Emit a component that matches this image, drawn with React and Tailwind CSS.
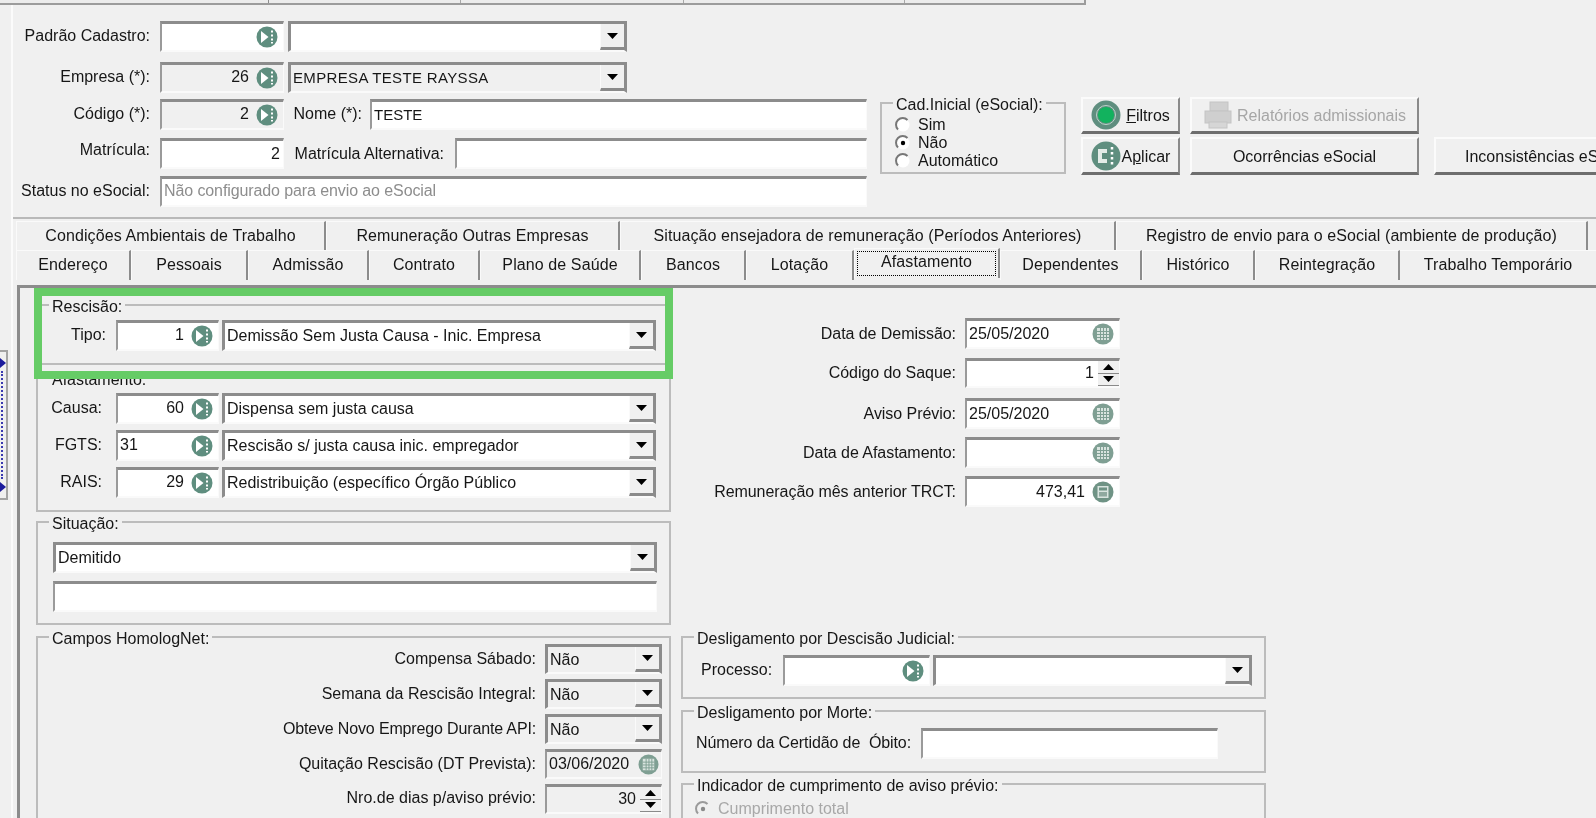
const sunken = "border-t-[3px] border-l-[2px] border-r border-b-2 border-t-[#8c8c8c] border-l-[#9a9a9a] border-r-[#fafafa] border-b-[#fafafa]";
const raised = "border-t-2 border-l-2 border-r-2 border-b-[3px] border-t-[#fbfbfb] border-l-[#fbfbfb] border-r-[#8a8a8a] border-b-[#6e6e6e]";

function Lookup() {
  return (
    <svg width="22" height="22" viewBox="0 0 22 22" className="shrink-0">
      <circle cx="11" cy="11" r="10.5" fill="#5f8e7f" />
      <path d="M5 5 L12.5 11 L5 17 Z" fill="#fff" />
      <path d="M16 4.5v2M16 8.5v2M16 12.5v2M16 16v1.5" stroke="#fff" strokeWidth="2" />
    </svg>
  );
}

function CalIcon({ size = 22 }) {
  return (
    <svg width={size} height={size} viewBox="0 0 22 22" className="shrink-0">
      <circle cx="11" cy="11" r="10.5" fill="#7f9f93" />
      <rect x="5" y="5" width="12" height="12" fill="#d9e4df" />
      <path d="M5 8.5h12M5 11.5h12M5 14.5h12M8.5 5v12M11.5 5v12M14.5 5v12" stroke="#7f9f93" strokeWidth="1" />
    </svg>
  );
}

function CalcIcon() {
  return (
    <svg width="22" height="22" viewBox="0 0 22 22" className="shrink-0">
      <circle cx="11" cy="11" r="10.5" fill="#6f9385" />
      <rect x="5.5" y="5" width="11" height="12" fill="#d9e4df" />
      <rect x="7" y="6.5" width="8" height="3" fill="#6f9385" />
      <rect x="7" y="11" width="8" height="4.5" fill="#8fa99f" />
    </svg>
  );
}

function Arrow({ up }) {
  return (
    <svg width="11" height="6" viewBox="0 0 11 6">
      <path d={up ? "M5.5 0 L11 6 L0 6 Z" : "M0 0 L11 0 L5.5 6 Z"} fill="#000" />
    </svg>
  );
}

function Field({ w, h = "h-[31px]", value, right, bg = "bg-white", muted, low, children }) {
  return (
    <div className={`${w} ${h} ${bg} ${sunken} shrink-0 flex items-center pl-[2px] pr-[5px] overflow-hidden`}>
      <span className={`flex-1 whitespace-nowrap ${low ? "-mt-[1px]" : "-mt-[2px]"} ${right ? "text-right pr-[7px]" : ""} ${muted ? "text-[#8d8d8d] tracking-[-0.1px]" : ""}`}>{value}</span>
      {children}
    </div>
  );
}

function Combo({ w, value, bg = "bg-white", h = "h-[31px]" }) {
  return (
    <div className={`${w} ${h} ${bg} border-t-[3px] border-l-[3px] border-r-[3px] border-b-[2px] border-t-[#8c8c8c] border-l-[#8c8c8c] border-r-[#8c8c8c] border-b-[#fafafa] shrink-0 flex items-stretch`}>
      <span className="flex-1 pl-[2px] pt-[1px] whitespace-nowrap overflow-hidden">{value}</span>
      <span className="w-[24px] bg-[#f0f0f0] flex items-center justify-center border-b-[3px] border-b-[#8a8a8a] border-l border-l-[#fafafa]">
        <Arrow />
      </span>
    </div>
  );
}

function Spin({ w, value, bg = "bg-white" }) {
  return (
    <div className={`${w} h-[30px] ${bg} ${sunken} shrink-0 flex items-stretch`}>
      <span className="flex-1 text-right pr-[4px] -mt-[1px] leading-[26px]">{value}</span>
      <span className="w-[21px] flex flex-col bg-[#f0f0f0]">
        <span className="flex-1 flex items-center justify-center border-b border-[#8a8a8a]"><Arrow up /></span>
        <span className="flex-1 flex items-center justify-center border-b border-[#8a8a8a]"><Arrow /></span>
      </span>
    </div>
  );
}

function Group({ title, className, children }) {
  return (
    <fieldset className={`border-2 border-[#bcbcbc] ${className}`}>
      <legend className="ml-[11px] px-[3px] h-[20px] leading-[23px]">{title}</legend>
      {children}
    </fieldset>
  );
}

function Radio({ checked, disabled, label }) {
  return (
    <div className={`flex items-center h-[18px] ${disabled ? "text-[#a8a8a8]" : ""}`}>
      <svg width="16" height="16" viewBox="0 0 16 16" className="shrink-0 mr-[7px]">
        <circle cx="8" cy="8" r="6.5" fill={disabled ? "#f0f0f0" : "#fff"} />
        <path d="M3 12.5 A6.5 6.5 0 0 1 12.5 3" fill="none" stroke={disabled ? "#9a9a9a" : "#777"} strokeWidth="2" />
        {checked && <circle cx="8" cy="8" r="2.2" fill={disabled ? "#8a8a8a" : "#000"} />}
      </svg>
      <span>{label}</span>
    </div>
  );
}

function Btn({ w, h, className = "", children }) {
  return (
    <div className={`${w} ${h} ${raised} bg-[#f0f0f0] flex items-center justify-center shrink-0 pt-[2px] ${className}`}>
      {children}
    </div>
  );
}

function TopRow({ label, mt, children }) {
  return (
    <div className={`flex h-[31px] ${mt}`}>
      {label}
      {children}
    </div>
  );
}

const row1 = [
  ["w-[310px]", "Condições Ambientais de Trabalho"],
  ["w-[294px]", "Remuneração Outras Empresas"],
  ["w-[496px]", "Situação ensejadora de remuneração (Períodos Anteriores)"],
  ["w-[472px]", "Registro de envio para o eSocial (ambiente de produção)"],
];

const row2 = [
  ["w-[115px]", "Endereço"],
  ["w-[117px]", "Pessoais"],
  ["w-[121px]", "Admissão"],
  ["w-[111px]", "Contrato"],
  ["w-[161px]", "Plano de Saúde"],
  ["w-[105px]", "Bancos"],
  ["w-[108px]", "Lotação"],
];

const row2b = [
  ["w-[142px]", "Dependentes"],
  ["w-[113px]", "Histórico"],
  ["w-[145px]", "Reintegração"],
];

function Tab({ w, label, low }) {
  return (
    <div className={`${w} shrink-0 h-full flex items-center justify-center border-l border-l-[#fafafa] border-t border-t-[#fafafa] border-r-2 border-r-[#8c8c8c] whitespace-nowrap tracking-[0.1px] ${low ? "pb-[2px]" : ""}`}>
      {label}
    </div>
  );
}

function FormRow({ label, mt = "", children }) {
  return (
    <div className={`flex items-center ${mt}`}>
      <span className="w-[275px] text-right mr-[9px] whitespace-nowrap shrink-0 tracking-[-0.05px]">{label}</span>
      {children}
    </div>
  );
}

function Splitter() {
  return (
    <div className="mt-[345px] h-[150px] w-[8px] border-t-2 border-b-2 border-r-2 border-[#a4a4a4] flex flex-col items-start justify-between py-[6px]">
      <svg width="6" height="10" viewBox="0 0 6 10"><path d="M0 0 L6 5 L0 10 Z" fill="#1a1a9c" /></svg>
      <div className="flex-1 my-[3px] ml-[1px] border-l-2 border-dotted border-[#3a3ab0]" />
      <svg width="6" height="10" viewBox="0 0 6 10"><path d="M0 0 L6 5 L0 10 Z" fill="#1a1a9c" /></svg>
    </div>
  );
}

export default function App() {
  return (
    <div className="w-[1596px] h-[818px] overflow-hidden bg-[#f0f0f0] text-[#161616] text-[16px] leading-[24px] blur-[0.4px] font-['Liberation_Sans',Arial,sans-serif] relative">
      {/* barra de cima cortada */}
      <div className="h-[5px] w-[1086px] bg-[#ececec] border-b-2 border-r-2 border-[#9c9c9c] flex">
        <div className="w-[269px] border-r border-[#8c8c8c]" />
        <div className="w-[192px] border-r border-[#a8a8a8]" />
        <div className="w-[223px] border-r border-[#a8a8a8]" />
        <div className="w-[221px] border-r border-[#a8a8a8]" />
      </div>

      <div className="flex h-[813px]">
        <div className="w-[11px] shrink-0">
          <Splitter />
        </div>

        <div className="flex-1 border-l-2 border-[#fbfbfb] min-w-0">
          {/* cabecalho */}
          <div className="flex items-start h-[212px] pt-[16px]">
            <div className="w-[854px] shrink-0">
              <TopRow label={<span className="w-[137px] text-right mr-[10px] pt-[3px] whitespace-nowrap">Padrão Cadastro:</span>}>
                <Field w="w-[124px]" value=""><Lookup /></Field>
                <div className="ml-[4px]"><Combo w="w-[339px]" value="" /></div>
              </TopRow>
              <TopRow mt="mt-[10px]" label={<span className="w-[137px] text-right mr-[10px] pt-[3px]">Empresa (*):</span>}>
                <Field w="w-[124px]" value="26" right bg="bg-[#f0f0f0]"><Lookup /></Field>
                <div className="ml-[4px]"><Combo w="w-[339px]" value={<span className="text-[15px] tracking-[0.35px]">EMPRESA TESTE RAYSSA</span>} bg="bg-[#f0f0f0]" /></div>
              </TopRow>
              <TopRow mt="mt-[6px]" label={<span className="w-[137px] text-right mr-[10px] pt-[3px]">Código (*):</span>}>
                <Field w="w-[124px]" value="2" right bg="bg-[#f0f0f0]"><Lookup /></Field>
                <span className="w-[78px] text-right mr-[8px] pt-[3px] whitespace-nowrap">Nome (*):</span>
                <Field w="w-[497px]" low value={<span className="text-[15px]">TESTE</span>} />
              </TopRow>
              <TopRow mt="mt-[8px]" label={<span className="w-[137px] text-right mr-[10px]">Matrícula:</span>}>
                <div className={`w-[124px] h-[31px] bg-white ${sunken} shrink-0 text-right pr-[3px] leading-[25px]`}>2</div>
                <span className="w-[160px] text-right mr-[11px] pt-[4px] whitespace-nowrap">Matrícula Alternativa:</span>
                <Field w="w-[412px]" value="" />
              </TopRow>
              <TopRow mt="mt-[7px]" label={<span className="w-[137px] text-right mr-[10px] pt-[3px] whitespace-nowrap">Status no eSocial:</span>}>
                <Field w="w-[707px]" value="Não configurado para envio ao eSocial" muted />
              </TopRow>
            </div>

            <Group title="Cad.Inicial (eSocial):" className="ml-[13px] mt-[72px] w-[186px] h-[81px] shrink-0">
              <div className="pl-[13px] pt-[3px]">
                <Radio label="Sim" />
                <Radio checked label="Não" />
                <Radio label="Automático" />
              </div>
            </Group>

            <div className="ml-[15px] mt-[76px] flex flex-col gap-[3px] shrink-0">
              <div className="flex gap-[10px]">
                <Btn w="w-[99px]" h="h-[37px]">
                  <svg width="30" height="30" viewBox="0 0 30 30" className="mr-[5px] -mt-[2px]">
                    <circle cx="15" cy="15" r="14.5" fill="#5f8e7f" />
                    <circle cx="15" cy="15" r="9.5" fill="none" stroke="#bcd3c9" strokeWidth="1" />
                    <circle cx="15" cy="15" r="8" fill="#12b25e" />
                  </svg>
                  <span><u>F</u>iltros</span>
                </Btn>
                <Btn w="w-[229px]" h="h-[37px]" className="text-[#a6a6a6]">
                  <svg width="30" height="30" viewBox="0 0 30 30" className="mr-[4px] -mt-[2px]">
                    <rect x="7" y="2" width="18" height="9" fill="#d0d0d0" stroke="#c4c4c4" />
                    <rect x="2" y="11" width="26" height="12" fill="#cfcfcf" stroke="#c4c4c4" />
                    <rect x="6" y="22" width="18" height="6" fill="#d6d6d6" stroke="#c4c4c4" />
                  </svg>
                  <span className="whitespace-nowrap">Relatórios admissionais</span>
                </Btn>
              </div>
              <div className="flex">
                <Btn w="w-[99px]" h="h-[38px]">
                  <svg width="30" height="30" viewBox="0 0 30 30" className="mr-[1px] -mt-[2px]">
                    <circle cx="15" cy="15" r="14.5" fill="#5f8e7f" />
                    <path d="M16 8H7v14h9v-4h-5v-6h5z" fill="#e4ece8" />
                    <path d="M21 6v2.5M21 11v2.5M21 16v2.5M21 21v2.5" stroke="#fff" strokeWidth="2.5" />
                  </svg>
                  <span>A<u>p</u>licar</span>
                </Btn>
                <Btn w="w-[229px] ml-[10px]" h="h-[38px]">Ocorrências eSocial</Btn>
                <Btn w="w-[200px] ml-[15px] justify-start! pl-[29px]" h="h-[38px]"><span className="whitespace-nowrap">Inconsistências eSocial</span></Btn>
              </div>
            </div>
          </div>

          <div className="h-[2px] bg-[#b9b9b9]" />

          {/* abas */}
          <div className="h-[29px] mt-[2px] ml-[3px] flex">
            {row1.map(([w, t]) => <Tab key={t} w={w} label={t} />)}
          </div>
          <div className="h-[30px] ml-[3px] flex">
            {row2.map(([w, t]) => <Tab key={t} w={w} label={t} low />)}
            <div className="w-[146px] h-[30px] -mt-[2px] shrink-0 bg-[#f0f0f0] border-l border-t border-[#fafafa] border-r-2 border-r-[#8c8c8c] p-[2px] relative">
              <div className="h-[25px] border border-dotted border-black flex items-center justify-center tracking-[0.1px]"><span className="-mt-[3px]">Afastamento</span></div>
            </div>
            {row2b.map(([w, t]) => <Tab key={t} w={w} label={t} low />)}
            <div className="w-[196px] shrink-0 h-full flex items-center justify-center border-t border-t-[#fafafa] whitespace-nowrap tracking-[0.1px] pb-[2px]">Trabalho Temporário</div>
          </div>

          {/* painel */}
          <div className="mt-[5px] ml-[4px] border-t-[3px] border-l-[3px] border-[#8c8c8c] h-[540px] flex items-start relative">
            <div className="w-[635px] ml-[16px] mt-[7px] shrink-0">
              <Group title="Rescisão:" className="h-[70px]">
                <div className="flex pt-[5px] pl-[13px]">
                  <span className="w-[55px] text-right mr-[10px] pt-[3px]">Tipo:</span>
                  <Field w="w-[103px]" value="1" right><Lookup /></Field>
                  <div className="ml-[3px]"><Combo w="w-[434px]" value="Demissão Sem Justa Causa - Inic. Empresa" /></div>
                </div>
              </Group>
              <Group title="Afastamento:" className="mt-[3px] h-[144px]">
                <div className="pt-[5px]">
                  {[["Causa:", "60", true, "Dispensa sem justa causa"], ["FGTS:", "31", false, "Rescisão s/ justa causa inic. empregador"], ["RAIS:", "29", true, "Redistribuição (específico Órgão Público"]].map(([l, v, r, c], i) => (
                    <div key={l} className={`flex pl-[13px] ${i > 0 ? "mt-[6px]" : ""}`}>
                      <span className="w-[51px] text-right mr-[14px] pt-[3px]">{l}</span>
                      <Field w="w-[103px]" value={v} right={r}><Lookup /></Field>
                      <div className="ml-[3px]"><Combo w="w-[434px]" value={c} /></div>
                    </div>
                  ))}
                </div>
              </Group>
              <Group title="Situação:" className="h-[113px]">
                <div className="pt-[10px] pl-[15px]">
                  <Combo w="w-[604px]" value="Demitido" />
                  <div className={`w-[604px] h-[31px] mt-[8px] bg-white ${sunken}`} />
                </div>
              </Group>
              <Group title="Campos HomologNet:" className="mt-[2px] h-[220px]">
                <div className="-mt-[3px]">
                  {[["Compensa Sábado:", "Não", ""], ["Semana da Rescisão Integral:", "Não", ""], ["Obteve Novo Emprego Durante API:", "Não", "tracking-[-0.15px]"]].map(([l, v, t]) => (
                    <div key={l} className="flex justify-end items-center h-[30px] mb-[5px] pr-[7px]">
                      <span className={`mr-[9px] whitespace-nowrap ${t}`}>{l}</span>
                      <Combo w="w-[117px]" h="h-[30px]" value={v} bg="bg-[#f0f0f0]" />
                    </div>
                  ))}
                  <div className="flex justify-end items-center h-[30px] mb-[5px] pr-[7px]">
                    <span className="mr-[9px] -mt-[1px] whitespace-nowrap">Quitação Rescisão (DT Prevista):</span>
                    <div className={`w-[117px] h-[30px] bg-[#f0f0f0] ${sunken} flex items-center pl-[2px] pr-[2px]`}>
                      <span className="flex-1 -mt-[2px]">03/06/2020</span>
                      <CalIcon size={21} />
                    </div>
                  </div>
                  <div className="flex justify-end items-center h-[30px] mb-[5px] pr-[7px]">
                    <span className="mr-[9px] -mt-[2px] whitespace-nowrap">Nro.de dias p/aviso prévio:</span>
                    <Spin w="w-[117px]" value="30" bg="bg-[#f0f0f0]" />
                  </div>
                  <div className="h-[30px] ml-[135px] mr-[7px] border-t-2 border-[#a4a4a4]" />
                </div>
              </Group>
            </div>

            <div className="ml-[10px] w-[585px] shrink-0 mt-[30px]">
              <FormRow label="Data de Demissão:">
                <Field w="w-[155px]" low value="25/05/2020"><CalIcon /></Field>
              </FormRow>
              <FormRow label="Código do Saque:" mt="mt-[9px]">
                <Spin w="w-[155px]" value="1" />
              </FormRow>
              <FormRow label="Aviso Prévio:" mt="mt-[10px]">
                <Field w="w-[155px]" low value="25/05/2020"><CalIcon /></Field>
              </FormRow>
              <FormRow label="Data de Afastamento:" mt="mt-[8px]">
                <Field w="w-[155px]" value=""><CalIcon /></Field>
              </FormRow>
              <FormRow label="Remuneração mês anterior TRCT:" mt="mt-[8px]">
                <Field w="w-[155px]" low value="473,41" right><CalcIcon /></Field>
              </FormRow>

              <Group title="Desligamento por Descisão Judicial:" className="mt-[120px] h-[72px]">
                <div className="flex items-center pt-[8px] pl-[18px]">
                  <span className="mr-[11px] -mt-[1px]">Processo:</span>
                  <Field w="w-[147px]" value=""><Lookup /></Field>
                  <div className="ml-[3px]"><Combo w="w-[319px]" value="" /></div>
                </div>
              </Group>
              <Group title="Desligamento por Morte:" className="mt-[2px] h-[72px]">
                <div className="flex items-center pt-[7px] pl-[13px]">
                  <span className="w-[225px] -mt-[1px] whitespace-pre tracking-[-0.1px]">Número da Certidão de  Óbito:</span>
                  <Field w="w-[297px]" value="" />
                </div>
              </Group>
              <Group title="Indicador de cumprimento de aviso prévio:" className="mt-[1px] h-[80px]">
                <div className="pt-[6px] pl-[12px]"><Radio checked disabled label="Cumprimento total" /></div>
              </Group>
            </div>
          </div>
        </div>
      </div>

      {/* destaque verde por cima */}
      <div className="absolute left-[34px] top-[288px] w-[639px] h-[91px] border-8 border-[#66cc66] pointer-events-none" />
    </div>
  );
}
